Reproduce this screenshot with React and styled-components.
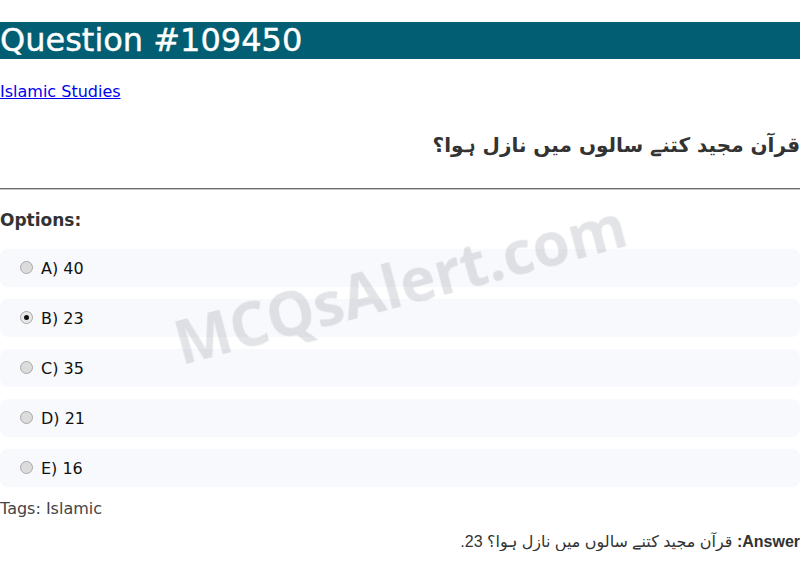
import React from "react";
import styled, { createGlobalStyle } from "styled-components";

const Global = createGlobalStyle`
  html, body { margin: 0; padding: 0; background: #fff; }
  body { font-family: "DejaVu Sans", sans-serif; color: #333; }
`;

const Page = styled.div`
  display: flex;
  flex-direction: column;
`;

const Title = styled.h1`
  margin: 22px 0 0;
  background: #025f73;
  color: #fff;
  font-size: 32px;
  font-weight: normal;
  line-height: 37px;
  -webkit-text-stroke: 0.4px #fff;
`;

const Category = styled.p`
  margin: 23px 0 0;
  font-size: 16px;
  line-height: 19px;
  a { color: #0000ee; text-decoration: underline; }
`;

const Question = styled.h2`
  margin: 29px 0 0;
  direction: rtl;
  text-align: right;
  font-size: 20px;
  font-weight: bold;
  line-height: 30px;
  color: #333;
`;

const Rule = styled.hr`
  margin: 28px 0 0;
  border: none;
  border-top: 1px solid #6b6b6b;
  border-bottom: 1px solid #c8c8c8;
`;

const OptionsLabel = styled.h3`
  margin: 20px 0 0;
  font-size: 17px;
  font-weight: bold;
  line-height: 20px;
  color: #333;
`;

const OptionList = styled.div`
  display: flex;
  flex-direction: column;
  gap: 12px;
  margin-top: 19px;
`;

const Option = styled.label`
  display: flex;
  align-items: center;
  gap: 8px;
  height: 38px;
  padding: 0 20px;
  box-sizing: border-box;
  background: #f8f9fc;
  border-radius: 8px;
  font-size: 16px;
  color: #111;
`;

const Radio = styled.span`
  width: 13px;
  height: 13px;
  box-sizing: border-box;
  border-radius: 50%;
  border: 1px solid #a8a8a8;
  background: ${(p) => (p.$checked ? "#e8e8e8" : "#dcdcdc")};
  display: flex;
  align-items: center;
  justify-content: center;
  margin-top: -2px;
  &::after {
    content: "";
    width: 5px;
    height: 5px;
    border-radius: 50%;
    background: ${(p) => (p.$checked ? "#111" : "transparent")};
  }
`;

const Tags = styled.p`
  margin: 12px 0 0;
  font-size: 16px;
  line-height: 19px;
  color: #444;
`;

const Answer = styled.p`
  margin: 14px 0 0;
  direction: rtl;
  text-align: right;
  font-family: "Liberation Sans", "DejaVu Sans", sans-serif;
  font-size: 16px;
  line-height: 19px;
  color: #333;
  b { font-weight: bold; }
`;

const Watermark = styled.div`
  position: fixed;
  top: 50%;
  left: 50%;
  transform: translate(-50%, -50%) rotate(-15deg);
  font-family: "Open Sans", "Noto Sans", sans-serif;
  font-weight: 700;
  font-size: 60px;
  color: rgba(100, 105, 120, 0.18);
  white-space: nowrap;
  pointer-events: none;
`;

const options = [
  { key: "A", text: "40" },
  { key: "B", text: "23", checked: true },
  { key: "C", text: "35" },
  { key: "D", text: "21" },
  { key: "E", text: "16" },
];

export default function App() {
  return (
    <Page>
      <Global />
      <Title>Question #109450</Title>
      <Category>
        <a href="#">Islamic Studies</a>
      </Category>
      <Question>قرآن مجید کتنے سالوں میں نازل ہوا؟</Question>
      <Rule />
      <OptionsLabel>Options:</OptionsLabel>
      <OptionList>
        {options.map((o) => (
          <Option key={o.key}>
            <Radio $checked={o.checked} />
            {o.key}) {o.text}
          </Option>
        ))}
      </OptionList>
      <Tags>Tags: Islamic</Tags>
      <Answer>
        <b>Answer:</b> قرآن مجید کتنے سالوں میں نازل ہوا؟ 23.
      </Answer>
      <Watermark>MCQsAlert.com</Watermark>
    </Page>
  );
}
